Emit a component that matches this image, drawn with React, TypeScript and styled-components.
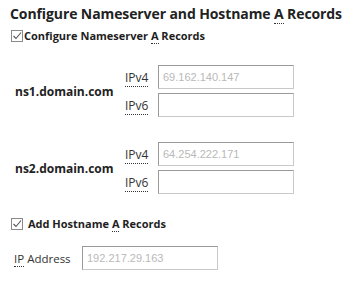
import styled, { createGlobalStyle } from 'styled-components'

const GlobalStyle = createGlobalStyle`
  html, body {
    margin: 0;
    padding: 0;
    background: #fff;
  }
  body {
    font-family: "Open Sans", "Liberation Sans", sans-serif;
    color: #2b2b2b;
  }
`

const Page = styled.div`
  width: 358px;
  height: 282px;
  padding: 5px 0 0 10px;
  box-sizing: border-box;
  overflow: hidden;
`

const Title = styled.h3`
  margin: 0;
  font-size: 14px;
  font-weight: 700;
  line-height: 18px;
  color: #222;
  letter-spacing: -0.1px;
`

const Abbr = styled.abbr`
  text-decoration: none;
  border-bottom: 1px dotted #333;
  cursor: help;
`

const CheckRow = styled.label<{ $gap: number }>`
  display: flex;
  align-items: center;
  gap: ${p => p.$gap}px;
  font-size: 11px;
  font-weight: 700;
  line-height: 14px;
  color: #1e1e1e;
`

const Box = styled.span`
  display: inline-flex;
  width: 12px;
  height: 12px;
  box-sizing: border-box;
  border: 1px solid #8a8a8a;
  background: #fff;
  margin-left: 1px;
`

const Servers = styled.div`
  display: flex;
  flex-direction: column;
  gap: 25px;
  margin-top: 22px;
`

const Server = styled.div`
  display: grid;
  grid-template-columns: 105px 43px 136px;
  grid-template-rows: 24px 24px;
  row-gap: 4px;
  align-items: center;
`

const HostName = styled.div`
  grid-row: 1 / 3;
  padding-left: 5px;
  font-size: 12px;
  font-weight: 700;
  color: #222;
  white-space: nowrap;
`

const FieldLabel = styled.div`
  font-size: 12px;
  color: #333;
  padding-left: 10px;
`

const Input = styled.input<{ $width?: number }>`
  box-sizing: border-box;
  width: ${p => p.$width ?? 136}px;
  height: 24px;
  margin: 0;
  padding: 0 4px;
  border: 1px solid;
  border-color: #9a9a9a #c9c9c9 #c9c9c9 #9a9a9a;
  font-family: "Liberation Sans", sans-serif;
  font-size: 11px;
  color: #b9b9b9;
  background: #fff;
  outline: none;
`

const HostSection = styled.div`
  margin-top: 23px;
  display: flex;
  flex-direction: column;
  gap: 15px;
`

const AddressRow = styled.div`
  display: flex;
  align-items: center;
  padding-left: 4px;
`

const AddressLabel = styled.span`
  font-size: 11.5px;
  color: #333;
  width: 68px;
  white-space: nowrap;
`

function Check() {
  return (
    <Box>
      <svg width="10" height="10" viewBox="0 0 10 10">
        <path d="M1.5 5 L4 7.5 L9 1.5" fill="none" stroke="#555" strokeWidth="1.1" />
      </svg>
    </Box>
  )
}

const servers = [
  { name: 'ns1.domain.com', v4: '69.162.140.147' },
  { name: 'ns2.domain.com', v4: '64.254.222.171' },
]

export default function App() {
  return (
    <Page>
      <GlobalStyle />
      <Title>
        Configure Nameserver and Hostname <Abbr title="Address">A</Abbr> Records
      </Title>
      <div style={{ marginTop: 6 }}>
        <CheckRow $gap={1}>
          <Check />
          <span>
            Configure Nameserver <Abbr title="Address">A</Abbr> Records
          </span>
        </CheckRow>
      </div>
      <Servers>
        {servers.map(s => (
          <Server key={s.name}>
            <HostName>{s.name}</HostName>
            <FieldLabel>
              <Abbr title="Internet Protocol version 4">IPv4</Abbr>
            </FieldLabel>
            <Input defaultValue={s.v4} />
            <FieldLabel>
              <Abbr title="Internet Protocol version 6">IPv6</Abbr>
            </FieldLabel>
            <Input />
          </Server>
        ))}
      </Servers>
      <HostSection>
        <CheckRow $gap={5}>
          <Check />
          <span>
            Add Hostname <Abbr title="Address">A</Abbr> Records
          </span>
        </CheckRow>
        <AddressRow>
          <AddressLabel>
            <Abbr title="Internet Protocol">IP</Abbr> Address
          </AddressLabel>
          <Input $width={136} defaultValue="192.217.29.163" />
        </AddressRow>
      </HostSection>
    </Page>
  )
}
